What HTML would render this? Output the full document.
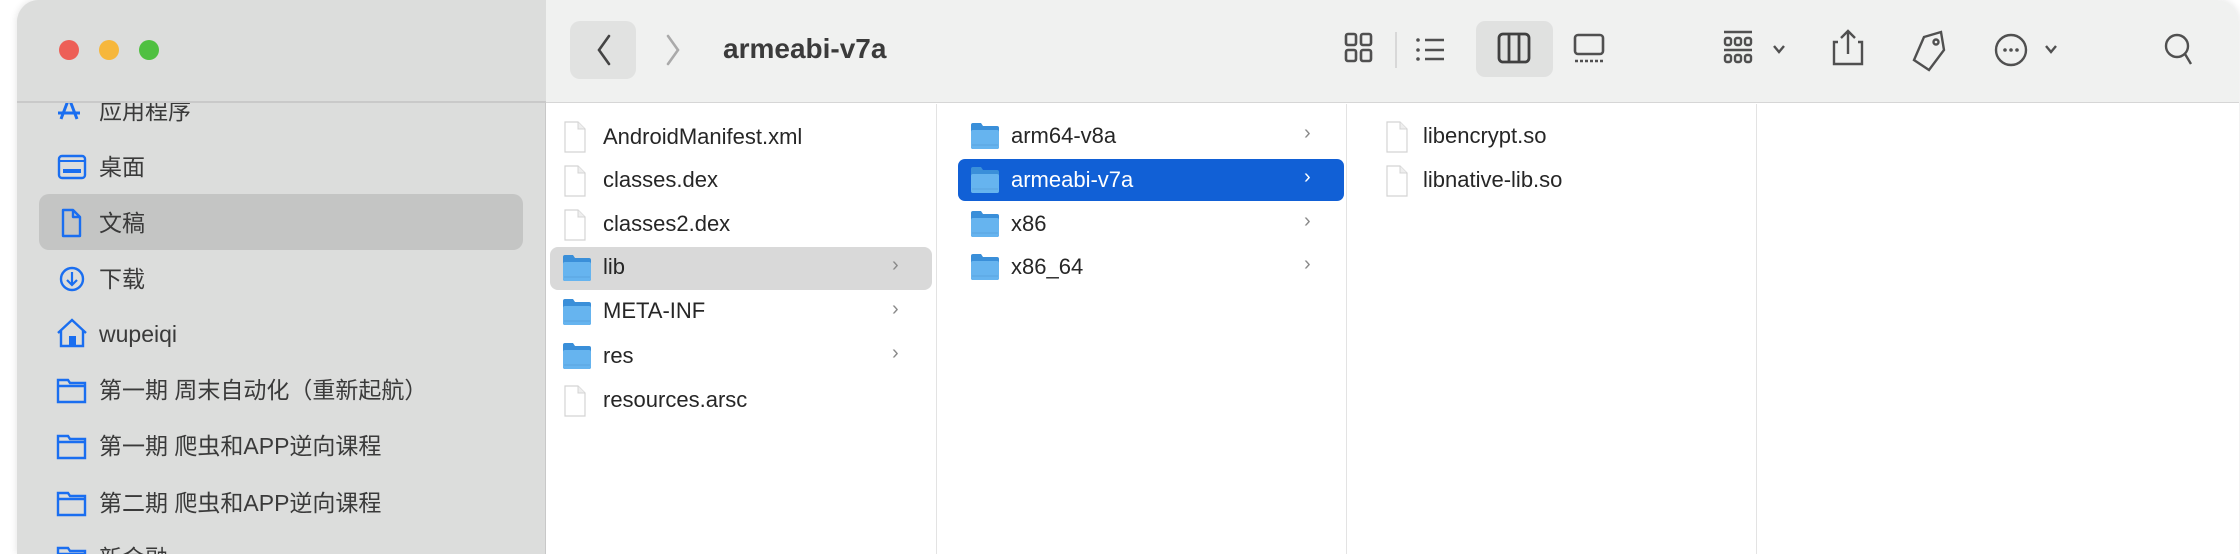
<!DOCTYPE html>
<html><head><meta charset="utf-8"><style>
*{margin:0;padding:0;box-sizing:border-box}
body{width:2240px;height:554px;background:#fff;position:relative;overflow:hidden;font-family:"Liberation Sans","Noto Sans CJK SC",sans-serif}
.a{position:absolute;white-space:nowrap}
.win{left:17px;top:0;width:2222px;height:554px;border-top-left-radius:22px;border-top-right-radius:22px;overflow:hidden;background:#fff;box-shadow:0 0 8px rgba(0,0,0,.12)}
.side{left:0;top:0;width:529px;height:554px;background:#dcdddc;border-right:1px solid #c8c8c8}
.tb{left:529px;top:0;right:0;height:103px;background:#f0f1f0;border-bottom:1px solid #d6d6d6}
.dot{width:20px;height:20px;border-radius:50%;top:40px}
.si{left:82px;font-size:23px;color:#3a3a3a;line-height:30px}
.sic{left:38px;width:34px;height:30px}
.ft{font-size:22px;color:#262626;line-height:28px}
.chev{font-size:20px;color:#8a8a8a}
.col{top:104px;width:1px;height:450px;background:#e3e3e3}
</style></head><body>
<svg width="0" height="0" style="position:absolute"><defs>
  <symbol id="doc" viewBox="0 0 24 32"><path d="M2 1 H15 L22 8 V31 H2 Z" fill="#fff" stroke="#d4d4d4" stroke-width="1.2"/><path d="M15 1 V8 H22" fill="#eee" stroke="#d4d4d4" stroke-width="1"/></symbol>
  <symbol id="fold" viewBox="0 0 30 28"><path d="M1 3 Q1 1 3 1 H11 L13 4 H27 Q29 4 29 6 V25 Q29 27 27 27 H3 Q1 27 1 25 Z" fill="#3a8fd9"/><rect x="1" y="8" width="28" height="19" rx="2" fill="#66b4ef"/><line x1="2" y1="23" x2="28" y2="23" stroke="#5aa3df" stroke-width="1"/></symbol>
</defs></svg>
<div class="a win">
 <div class="a side"></div>
 <div class="a" style="left:0;top:0;width:529px;height:103px;background:#dcdddc;border-bottom:2px solid #c9c9c9;z-index:2"></div>
 <div class="a dot" style="left:42px;background:#ed5f57;z-index:3"></div>
 <div class="a dot" style="left:82px;background:#f6b73c;z-index:3"></div>
 <div class="a dot" style="left:122px;background:#4fc041;z-index:3"></div>
 <div class="a" style="left:22px;top:194px;width:484px;height:56px;background:#c4c5c4;border-radius:10px"></div>
 <svg class="a sic" style="top:95px" viewBox="0 0 34 30"><path d="M14 3 L6 24 M14 3 L22 24 M3 18 H25" stroke="#1a6ef0" stroke-width="3" fill="none"/></svg>
 <div class="a si" style="top:96px">应用程序</div>
 <svg class="a sic" style="top:152px" viewBox="0 0 34 30"><rect x="4" y="4" width="26" height="22" rx="3" stroke="#1a6ef0" stroke-width="2.4" fill="none"/><line x1="4" y1="9" x2="30" y2="9" stroke="#1a6ef0" stroke-width="2"/><rect x="8" y="17" width="18" height="4" fill="#1a6ef0"/></svg>
 <div class="a si" style="top:152px">桌面</div>
 <svg class="a sic" style="top:208px" viewBox="0 0 34 30"><path d="M8 2 H18 L25 9 V28 H8 Z M18 2 V9 H25" stroke="#1a6ef0" stroke-width="2.4" fill="none" stroke-linejoin="round"/></svg>
 <div class="a si" style="top:208px">文稿</div>
 <svg class="a sic" style="top:264px" viewBox="0 0 34 30"><circle cx="17" cy="15" r="11" stroke="#1a6ef0" stroke-width="2.4" fill="none"/><path d="M17 8 V21 M12 16 L17 21 L22 16" stroke="#1a6ef0" stroke-width="2.2" fill="none"/></svg>
 <div class="a si" style="top:264px">下载</div>
 <svg class="a sic" style="top:318px" viewBox="0 0 34 30"><path d="M3 15 L17 2 L31 15 M6 12 V28 H28 V12" stroke="#1a6ef0" stroke-width="2.4" fill="none"/><rect x="14" y="18" width="7" height="10" fill="#1a6ef0"/></svg>
 <div class="a si" style="top:319px">wupeiqi</div>
 <svg class="a sic" style="top:375px" viewBox="0 0 34 30"><path d="M3 5 H13 L15 8 H30 V27 H3 Z M3 11 H30" stroke="#1a6ef0" stroke-width="2.4" fill="none"/></svg>
 <div class="a si" style="top:375px">第一期 周末自动化（重新起航）</div>
 <svg class="a sic" style="top:431px" viewBox="0 0 34 30"><path d="M3 5 H13 L15 8 H30 V27 H3 Z M3 11 H30" stroke="#1a6ef0" stroke-width="2.4" fill="none"/></svg>
 <div class="a si" style="top:431px">第一期 爬虫和APP逆向课程</div>
 <svg class="a sic" style="top:488px" viewBox="0 0 34 30"><path d="M3 5 H13 L15 8 H30 V27 H3 Z M3 11 H30" stroke="#1a6ef0" stroke-width="2.4" fill="none"/></svg>
 <div class="a si" style="top:488px">第二期 爬虫和APP逆向课程</div>
 <svg class="a sic" style="top:543px" viewBox="0 0 34 30"><path d="M3 5 H13 L15 8 H30 V27 H3 Z M3 11 H30" stroke="#1a6ef0" stroke-width="2.4" fill="none"/></svg>
 <div class="a si" style="top:543px">新金融</div>
 <div class="a tb"></div>
 <div class="a" style="left:553px;top:21px;width:66px;height:58px;background:#e1e2e1;border-radius:10px"></div>
 <svg class="a" style="left:575px;top:33px" width="24" height="34" viewBox="0 0 24 34"><path d="M17 3 L7 17 L17 31" stroke="#444" stroke-width="2.6" fill="none" stroke-linecap="round"/></svg>
 <svg class="a" style="left:644px;top:33px" width="24" height="34" viewBox="0 0 24 34"><path d="M7 3 L17 17 L7 31" stroke="#aaa" stroke-width="2.6" fill="none" stroke-linecap="round"/></svg>
 <div class="a" style="left:706px;top:33px;font-size:28px;font-weight:bold;color:#3b3b3b">armeabi-v7a</div>
 <svg class="a" style="left:1311px;top:0px" width="880" height="100" viewBox="1328 0 880 100">
  <g stroke="#505050" stroke-width="2.6" fill="none">
   <rect x="1346" y="34" width="10" height="11" rx="2"/><rect x="1361" y="34" width="10" height="11" rx="2"/><rect x="1346" y="50" width="10" height="11" rx="2"/><rect x="1361" y="50" width="10" height="11" rx="2"/>
   <line x1="1425" y1="40" x2="1444" y2="40"/><line x1="1425" y1="50" x2="1444" y2="50"/><line x1="1425" y1="59" x2="1444" y2="59"/>
  </g>
  <line x1="1396" y1="32" x2="1396" y2="68" stroke="#d0d0d0" stroke-width="1.5"/>
  <g fill="#505050"><circle cx="1418" cy="40" r="1.8"/><circle cx="1418" cy="50" r="1.8"/><circle cx="1418" cy="59" r="1.8"/></g>
  <rect x="1476" y="21" width="77" height="56" rx="9" fill="#e0e1e0"/>
  <g stroke="#404040" stroke-width="2.8" fill="none"><rect x="1499" y="34" width="30" height="28" rx="4"/><line x1="1509" y1="34" x2="1509" y2="62"/><line x1="1519" y1="34" x2="1519" y2="62"/></g>
  <g stroke="#505050" stroke-width="2.6" fill="none"><rect x="1575" y="35" width="28" height="19" rx="3"/><line x1="1575" y1="61" x2="1603" y2="61" stroke-dasharray="3 2"/></g>
  <g stroke="#505050" stroke-width="2.4" fill="none"><line x1="1724" y1="32" x2="1752" y2="32"/><rect x="1725" y="38" width="6" height="7" rx="2"/><rect x="1735" y="38" width="6" height="7" rx="2"/><rect x="1745" y="38" width="6" height="7" rx="2"/><line x1="1724" y1="50" x2="1752" y2="50"/><rect x="1725" y="55" width="6" height="7" rx="2"/><rect x="1735" y="55" width="6" height="7" rx="2"/><rect x="1745" y="55" width="6" height="7" rx="2"/>
   <path d="M1774 46 L1779 52 L1784 46"/>
   <path d="M1838 42 H1834 V64 H1862 V42 H1858 M1848 31 V54 M1841 38 L1848 31 L1855 38"/>
   <path d="M1924 37 L1941 32 L1944 50 L1929 70 L1914 60 Z"/><circle cx="1936" cy="42" r="2.5"/>
   <circle cx="2011" cy="50" r="15"/>
   <path d="M2046 46 L2051 52 L2056 46"/>
   <circle cx="2177" cy="46" r="11"/><line x1="2185" y1="54" x2="2191" y2="64"/>
  </g>
  <g fill="#505050"><circle cx="2005" cy="50" r="1.8"/><circle cx="2011" cy="50" r="1.8"/><circle cx="2017" cy="50" r="1.8"/></g>
 </svg>
 <div class="a col" style="left:919px"></div>
 <div class="a col" style="left:1329px"></div>
 <div class="a col" style="left:1739px"></div>
 <div class="a" style="left:533px;top:247px;width:382px;height:43px;background:#d9d9d9;border-radius:8px"></div>
 <div class="a" style="left:941px;top:159px;width:386px;height:42px;background:#1160d6;border-radius:7px"></div>
</div>
<div style="position:absolute;left:17px;top:0">
 <svg class="a" style="left:546px;top:121px" width="24" height="32"><use href="#doc"/></svg>
 <div class="a ft" style="left:586px;top:123px">AndroidManifest.xml</div>
 <svg class="a" style="left:546px;top:165px" width="24" height="32"><use href="#doc"/></svg>
 <div class="a ft" style="left:586px;top:166px">classes.dex</div>
 <svg class="a" style="left:546px;top:209px" width="24" height="32"><use href="#doc"/></svg>
 <div class="a ft" style="left:586px;top:210px">classes2.dex</div>
 <svg class="a" style="left:545px;top:254px" width="30" height="28"><use href="#fold"/></svg>
 <div class="a ft" style="left:586px;top:253px">lib</div>
 <svg class="a" style="left:545px;top:298px" width="30" height="28"><use href="#fold"/></svg>
 <div class="a ft" style="left:586px;top:297px">META-INF</div>
 <svg class="a" style="left:545px;top:342px" width="30" height="28"><use href="#fold"/></svg>
 <div class="a ft" style="left:586px;top:342px">res</div>
 <svg class="a" style="left:546px;top:385px" width="24" height="32"><use href="#doc"/></svg>
 <div class="a ft" style="left:586px;top:386px">resources.arsc</div>
 <div class="a chev" style="left:875px;top:254px">›</div>
 <div class="a chev" style="left:875px;top:298px">›</div>
 <div class="a chev" style="left:875px;top:342px">›</div>
 <svg class="a" style="left:953px;top:122px" width="30" height="28"><use href="#fold"/></svg>
 <div class="a ft" style="left:994px;top:122px">arm64-v8a</div>
 <svg class="a" style="left:953px;top:166px" width="30" height="28"><use href="#fold"/></svg>
 <div class="a ft" style="left:994px;top:166px;color:#fff">armeabi-v7a</div>
 <svg class="a" style="left:953px;top:210px" width="30" height="28"><use href="#fold"/></svg>
 <div class="a ft" style="left:994px;top:210px">x86</div>
 <svg class="a" style="left:953px;top:253px" width="30" height="28"><use href="#fold"/></svg>
 <div class="a ft" style="left:994px;top:253px">x86_64</div>
 <div class="a chev" style="left:1287px;top:122px">›</div>
 <div class="a chev" style="left:1287px;top:166px;color:#fff">›</div>
 <div class="a chev" style="left:1287px;top:210px">›</div>
 <div class="a chev" style="left:1287px;top:253px">›</div>
 <svg class="a" style="left:1368px;top:121px" width="24" height="32"><use href="#doc"/></svg>
 <div class="a ft" style="left:1406px;top:122px">libencrypt.so</div>
 <svg class="a" style="left:1368px;top:165px" width="24" height="32"><use href="#doc"/></svg>
 <div class="a ft" style="left:1406px;top:166px">libnative-lib.so</div>
</div>
</body></html>
